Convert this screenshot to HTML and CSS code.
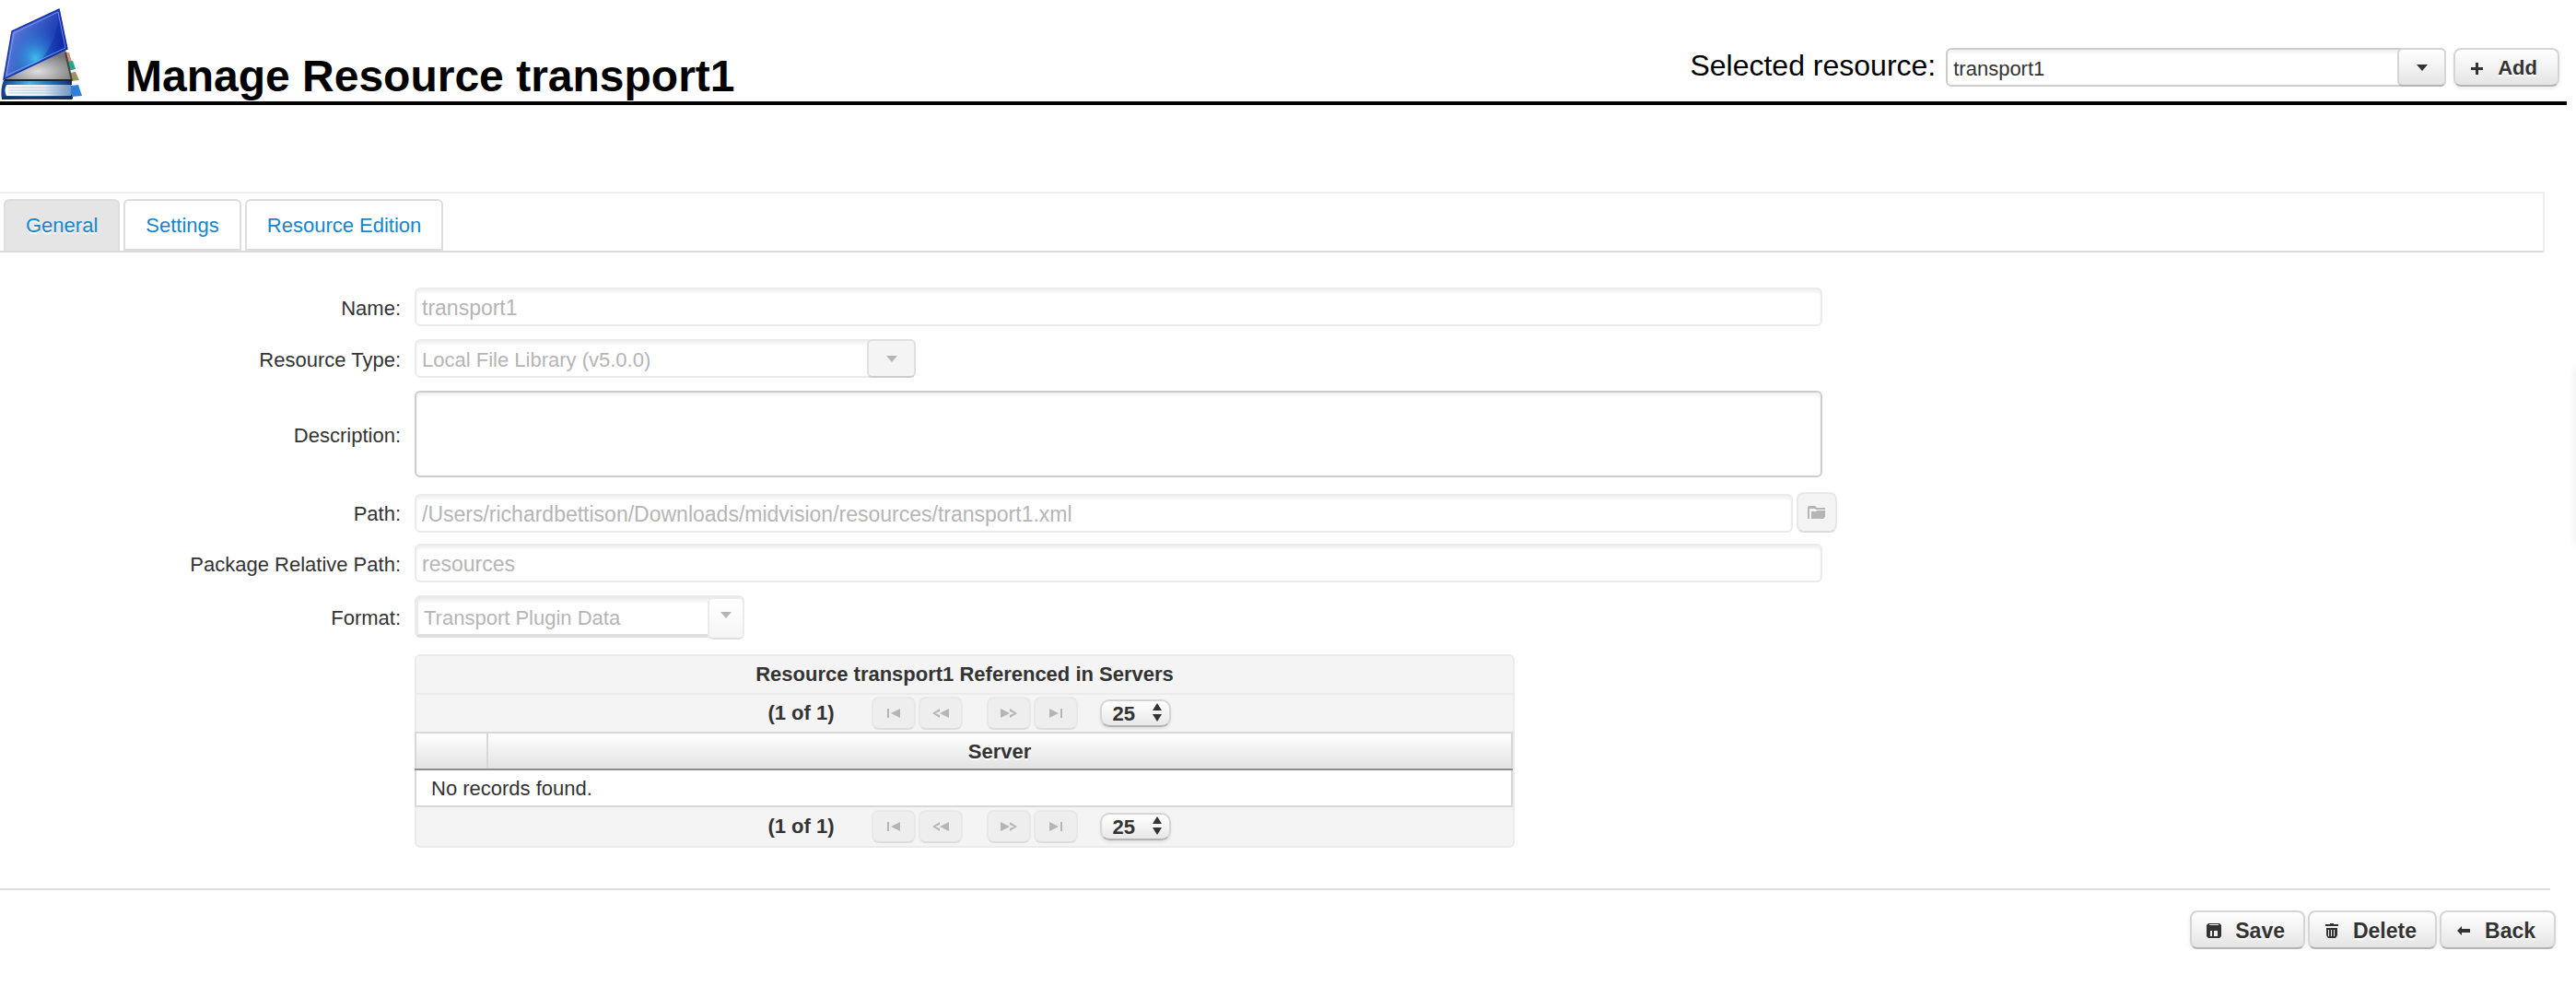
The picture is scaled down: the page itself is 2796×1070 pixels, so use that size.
FILE: index.html
```html
<!DOCTYPE html>
<html lang="en">
    <head>
        <meta charset="UTF-8" />
        <meta name="viewport" content="width=device-width, initial-scale=1.0" />
        <title>Manage Resource transport1</title>
        <link rel="stylesheet" href="styles.css">
    </head>
    <body>
        <svg width="0" height="0" class="sprite" aria-hidden="true">
            <symbol id="icon-first" viewBox="0 0 16 12"><path d="M1 1h2v10H1zM15 1v10L5 6z" /></symbol>
            <symbol id="icon-prev" viewBox="0 0 20 12"><path d="M9 1v3L4 6l5 2v3L1 6zM19 1v10L9 6z" /></symbol>
            <symbol id="icon-next" viewBox="0 0 20 12"><path d="M1 1v10l10-5zM11 1v3l5 2-5 2v3l8-5z" /></symbol>
            <symbol id="icon-last" viewBox="0 0 16 12"><path d="M1 1v10l10-5zM13 1h2v10h-2z" /></symbol>
            <symbol id="icon-updown" viewBox="0 0 10 20"><path d="M5 0l5 8H0zM0 12h10l-5 8z" /></symbol>
        </svg>

        <header class="header">
            <svg class="book" viewBox="0 0 90 110" aria-hidden="true">
                <defs>
                    <linearGradient id="cover" x1="0" y1="0" x2="1" y2="0.4">
                        <stop offset="0" stop-color="#7f8fdc" />
                        <stop offset="0.5" stop-color="#3f62cc" />
                        <stop offset="1" stop-color="#0c2aa8" />
                    </linearGradient>
                    <radialGradient id="glow" cx="0.5" cy="0.7" r="0.5">
                        <stop offset="0" stop-color="#3dbdea" />
                        <stop offset="1" stop-color="#1c50c4" stop-opacity="0" />
                    </radialGradient>
                    <radialGradient id="inside" cx="0.5" cy="0.7" r="0.6">
                        <stop offset="0" stop-color="#dedede" />
                        <stop offset="1" stop-color="#777" />
                    </radialGradient>
                    <linearGradient id="pages" x1="0" y1="0" x2="1" y2="0">
                        <stop offset="0" stop-color="#fff" />
                        <stop offset="0.6" stop-color="#e3ecf6" />
                        <stop offset="1" stop-color="#6f94c0" />
                    </linearGradient>
                    <linearGradient id="spine" x1="0" y1="0" x2="1" y2="0">
                        <stop offset="0" stop-color="#123c8c" />
                        <stop offset="0.4" stop-color="#4ab4e8" />
                        <stop offset="1" stop-color="#102c6c" />
                    </linearGradient>
                </defs>
                <path d="M70 56l5 1 3 10-6 1z" fill="#cf8d84" />
                <path d="M72 67l7-1 3 9-8 2z" fill="#2fa283" />
                <path d="M75 79l7-1 4 9-9 1z" fill="#9c9360" />
                <path d="M77 93l8-1 4 12-12 1z" fill="#2f7fd8" />
                <path d="M5 86L71 54l7 34H4z" fill="url(#inside)" />
                <path d="M71 57l7 31" stroke="#444" stroke-width="2" />
                <path d="M13 34L64 10l9 43L4 86z" fill="url(#cover)" />
                <path d="M13 34L64 10l9 43L4 86z" fill="url(#glow)" />
                <path d="M65 11l8 42-31 15q20-22 23-57z" fill="#0a25a5" fill-opacity="0.4" />
                <path d="M13 34L64 10l9 43L4 86z" fill="none" stroke="#1730a8" stroke-width="1.5" />
                <path d="M15 36L63 13l8 39L7 82z" fill="none" stroke="#8ea4ee" stroke-width="1" stroke-opacity="0.8" />
                <path d="M4 87q-4 10-2 21h76v-5H8q-2-5 0-11h70v-5z" fill="url(#spine)" />
                <path d="M5 87h73" stroke="#222" stroke-width="2" />
                <path d="M7 92h70v12H7q-3-6 0-12z" fill="url(#pages)" />
                <path d="M9 95h67M9 98h67M9 101h67" stroke="#8aa4c4" stroke-width="1" stroke-opacity="0.5" />
                <path d="M2 106h77" stroke="#183060" stroke-width="3" />
            </svg>
            <h1>Manage Resource transport1</h1>
            <div class="picker">
                <label for="selectedResource">Selected resource:</label>
                <div class="dropdown dropdown-resource">
                    <select id="selectedResource">
                        <option>transport1</option>
                    </select>
                    <span class="arrow"></span>
                </div>
                <button class="btn btn-add">
                    <svg width="14" height="14" viewBox="0 0 14 14"><path d="M6 1h3v5h5v3H9v5H6V9H1V6h5z" /></svg>
                    Add
                </button>
            </div>
        </header>

        <nav class="tabs">
            <a href="#general" class="tab active">General</a>
            <a href="#settings" class="tab">Settings</a>
            <a href="#edition" class="tab">Resource Edition</a>
        </nav>

        <main class="form" id="general">
            <div class="form-row">
                <label for="name">Name:</label>
                <div class="field"><input type="text" id="name" value="transport1" disabled /></div>
            </div>
            <div class="form-row">
                <label for="resourceType">Resource Type:</label>
                <div class="dropdown dropdown-type">
                    <select id="resourceType" disabled>
                        <option>Local File Library (v5.0.0)</option>
                    </select>
                    <span class="arrow"></span>
                </div>
            </div>
            <div class="form-row">
                <label for="description">Description:</label>
                <div class="field"><textarea id="description"></textarea></div>
            </div>
            <div class="form-row path-row">
                <label for="path">Path:</label>
                <div class="field">
                    <input type="text" id="path" value="/Users/richardbettison/Downloads/midvision/resources/transport1.xml" disabled />
                    <button class="btn btn-browse" aria-label="Browse" disabled>
                        <svg width="20" height="16" viewBox="0 0 20 16"><path d="M0 15V3q0-2 2-2h6l2 2h9v2H9L8 4H3Q2 4 2 5v10zM4 7h5l1-1h9v7l-2 2H4z" /></svg>
                    </button>
                </div>
            </div>
            <div class="form-row">
                <label for="packagePath">Package Relative Path:</label>
                <div class="field"><input type="text" id="packagePath" value="resources" disabled /></div>
            </div>
            <div class="form-row">
                <label for="format">Format:</label>
                <div class="dropdown dropdown-format">
                    <select id="format" disabled>
                        <option>Transport Plugin Data</option>
                    </select>
                    <span class="arrow"></span>
                </div>
            </div>

            <section class="datatable">
                <h2>Resource transport1 Referenced in Servers</h2>
                <div class="paginator">
                    <span class="current">(1 of 1)</span>
                    <button class="btn page-btn" aria-label="First" disabled><svg width="16" height="12"><use href="#icon-first" /></svg></button>
                    <button class="btn page-btn" aria-label="Previous" disabled><svg width="20" height="12"><use href="#icon-prev" /></svg></button>
                    <button class="btn page-btn page-next" aria-label="Next" disabled><svg width="20" height="12"><use href="#icon-next" /></svg></button>
                    <button class="btn page-btn" aria-label="Last" disabled><svg width="16" height="12"><use href="#icon-last" /></svg></button>
                    <div class="rows">
                        <select aria-label="Rows per page"><option>25</option></select>
                        <svg width="10" height="20"><use href="#icon-updown" /></svg>
                    </div>
                </div>
                <table>
                    <thead>
                        <tr>
                            <th class="col-select"></th>
                            <th>Server</th>
                        </tr>
                    </thead>
                    <tbody>
                        <tr>
                            <td colspan="2">No records found.</td>
                        </tr>
                    </tbody>
                </table>
                <div class="paginator paginator-bottom">
                    <span class="current">(1 of 1)</span>
                    <button class="btn page-btn" aria-label="First" disabled><svg width="16" height="12"><use href="#icon-first" /></svg></button>
                    <button class="btn page-btn" aria-label="Previous" disabled><svg width="20" height="12"><use href="#icon-prev" /></svg></button>
                    <button class="btn page-btn page-next" aria-label="Next" disabled><svg width="20" height="12"><use href="#icon-next" /></svg></button>
                    <button class="btn page-btn" aria-label="Last" disabled><svg width="16" height="12"><use href="#icon-last" /></svg></button>
                    <div class="rows">
                        <select aria-label="Rows per page"><option>25</option></select>
                        <svg width="10" height="20"><use href="#icon-updown" /></svg>
                    </div>
                </div>
            </section>
        </main>

        <footer class="footer">
            <button class="btn">
                <svg viewBox="0 0 16 16"><path fill-rule="evenodd" d="M2 0h12l2 2v12l-2 2H2l-2-2V2zM3 1v1h10V1zM4 8v6h2V8zM8 8v6h4V8z" /></svg>
                Save
            </button>
            <button class="btn">
                <svg viewBox="0 0 16 16"><path fill-rule="evenodd" d="M6 0h4v1h5v2H1V1h5zM2 5h12v8l-2 3H4l-2-3zM4 7v7h1V7zM7 7v7h1V7zM10 7v7h1V7z" /></svg>
                Delete
            </button>
            <button class="btn">
                <svg viewBox="0 0 16 16"><path d="M1 8l5-5v3h9v4H6v3z" /></svg>
                Back
            </button>
        </footer>
        <aside class="side-panel"></aside>
    </body>
</html>
```

FILE: styles.css
```css
* {
    margin: 0;
    padding: 0;
    box-sizing: border-box;
}
body {
    font-family: "Liberation Sans", Arial, sans-serif;
    font-size: 22px;
    line-height: 26px;
    color: #333;
    background: white;
}
.sprite {
    display: block;
}
svg {
    fill: currentColor;
}

.header {
    display: flex;
    align-items: flex-end;
    height: 114px;
    margin-right: 10px;
    border-bottom: 4px solid black;
    color: black;
}
.book {
    width: 90px;
    height: 110px;
    margin-right: 46px;
}
.header h1 {
    font-size: 48px;
    line-height: 54px;
}
.picker {
    display: flex;
    align-items: center;
    margin: 0 8px 16px auto;
}
.picker label {
    margin-right: 11px;
    font-size: 32px;
    line-height: 38px;
    padding-bottom: 4px;
}

input,
textarea,
select,
button {
    font-family: inherit;
    font-size: 22px;
    color: #333;
}
input,
textarea,
select {
    width: 100%;
    height: 42px;
    padding: 2px 6px 0;
    border: 2px solid #ccc;
    border-radius: 6px;
    background: white;
    box-shadow: inset 0 3px 3px rgba(0, 0, 0, 0.06);
}
input {
    font-size: 23px;
}
textarea {
    display: block;
    height: 94px;
    resize: none;
}
select {
    display: block;
    appearance: none;
}
input:disabled,
select:disabled {
    border-color: #ebebeb;
    color: #b5b5b5;
    opacity: 1;
}

.btn {
    display: flex;
    align-items: center;
    height: 42px;
    padding: 2px 22px 0 16px;
    border: 2px solid #d5d5d5;
    border-bottom-color: #b3b3b3;
    border-radius: 8px;
    background: linear-gradient(#fff, #e5e5e5);
    box-shadow: 0 2px 4px rgba(0, 0, 0, 0.08);
    font-weight: bold;
    text-shadow: 0 2px 0 white;
}
.btn:disabled {
    border-color: #e8e8e8;
    border-bottom-color: #dcdcdc;
    background: #f4f4f4;
    box-shadow: none;
    color: #b5b5b5;
}
.btn-add {
    gap: 16px;
    margin-left: 8px;
}

.dropdown {
    position: relative;
}
.dropdown-resource {
    width: 543px;
}
.dropdown-type {
    width: 544px;
}
.dropdown-format {
    width: 358px;
}
.arrow {
    position: absolute;
    top: 0;
    right: 0;
    bottom: 0;
    display: flex;
    align-items: center;
    justify-content: center;
    width: 53px;
    border: 2px solid #d5d5d5;
    border-bottom-color: #b3b3b3;
    border-radius: 6px;
    background: linear-gradient(#fff, #e5e5e5);
    color: #333;
    pointer-events: none;
}
.arrow::before {
    content: "";
    border: 6px solid transparent;
    border-top: 7px solid currentColor;
    border-bottom: 0;
}
.dropdown-type .arrow {
    border-color: #e0e0e0;
    border-bottom-color: #ccc;
    background: #f4f4f4;
    color: #b5b5b5;
}
.dropdown-format select {
    height: 46px;
    border-width: 4px 2px 4px 4px;
    border-bottom-color: #e0e0e0;
}
.dropdown-format .arrow {
    top: 2px;
    bottom: -2px;
    width: 40px;
    padding-bottom: 8px;
    border-color: #ebebeb;
    border-bottom-color: #e0e0e0;
    background: linear-gradient(#fff, #f5f5f5);
    color: #b5b5b5;
}

.tabs {
    display: flex;
    gap: 4px;
    margin: 94px 34px 0 0;
    padding: 6px 0 0 4px;
    border: 2px solid #eee;
    border-left: 0;
    border-bottom-color: #ddd;
}
.tab {
    height: 56px;
    padding: 0 22px;
    border: 2px solid #ddd;
    border-radius: 6px 6px 0 0;
    line-height: 54px;
    color: #1585cf;
    text-decoration: none;
}
.tab.active {
    border-bottom: 0;
    background: #e5e5e5;
    text-shadow: 0 2px 0 white;
}

.form {
    padding-top: 38px;
}
.form-row {
    display: flex;
    align-items: center;
    margin-bottom: 14px;
}
.form-row label {
    width: 435px;
    margin-right: 15px;
    padding-top: 3px;
    text-align: right;
}
.field {
    width: 1528px;
}
.path-row {
    margin: 16px 0 12px;
}
.path-row .field {
    display: flex;
    align-items: flex-end;
    gap: 4px;
    width: 1544px;
}
.btn-browse {
    flex: none;
    justify-content: center;
    width: 44px;
    height: 44px;
    padding: 0;
}

.datatable {
    width: 1194px;
    margin: 18px 0 0 450px;
    border: 2px solid #ebebeb;
    border-radius: 6px;
    background: #f4f4f4;
}
.datatable h2 {
    border-bottom: 2px solid #ebebeb;
    font-size: 22px;
    line-height: 40px;
    text-align: center;
}
.paginator {
    display: flex;
    align-items: center;
    justify-content: center;
    height: 40px;
    padding-left: 10px;
}
.paginator-bottom {
    height: 42px;
}
.current {
    margin-right: 40px;
    font-weight: bold;
}
.page-btn {
    justify-content: center;
    width: 48px;
    height: 36px;
    margin-right: 3px;
    padding: 0;
}
.page-btn:disabled {
    background: #eee;
}
.page-next {
    margin-left: 23px;
}
.rows {
    position: relative;
    width: 77px;
    margin-left: 21px;
}
.rows select {
    height: 30px;
    padding: 0 12px;
    border-color: #d5d5d5;
    border-bottom-color: #b3b3b3;
    border-radius: 10px;
    background: linear-gradient(#fff, #e8e8e8);
    box-shadow: 0 2px 3px rgba(0, 0, 0, 0.08);
    font-weight: bold;
}
.rows svg {
    position: absolute;
    top: 4px;
    right: 10px;
    pointer-events: none;
}

table {
    width: 1192px;
    margin-left: -2px;
    border-collapse: collapse;
}
th,
td {
    height: 40px;
    padding: 2px 16px 0;
    border: 2px solid #d8d8d8;
    line-height: 26px;
}
th {
    border-bottom-color: #8c8c8c;
    background: linear-gradient(#fff, #e3e3e3);
    text-shadow: 0 2px 0 white;
}
.col-select {
    width: 78px;
}
td {
    background: white;
}

.footer {
    display: flex;
    justify-content: flex-end;
    gap: 3px;
    margin: 44px 28px 0 0;
    padding-top: 22px;
    border-top: 2px solid #ddd;
}
.footer .btn {
    gap: 15px;
    padding-right: 20px;
    font-size: 23px;
}
.footer .btn:last-child {
    margin-right: -6px;
}
.footer svg {
    width: 16px;
    height: 16px;
}

/* collapsed panel, only its shadow shows at the window edge */
.side-panel {
    position: fixed;
    top: 400px;
    right: -10px;
    width: 10px;
    height: 190px;
    box-shadow: 0 0 10px rgba(0, 0, 0, 0.1);
}
```
